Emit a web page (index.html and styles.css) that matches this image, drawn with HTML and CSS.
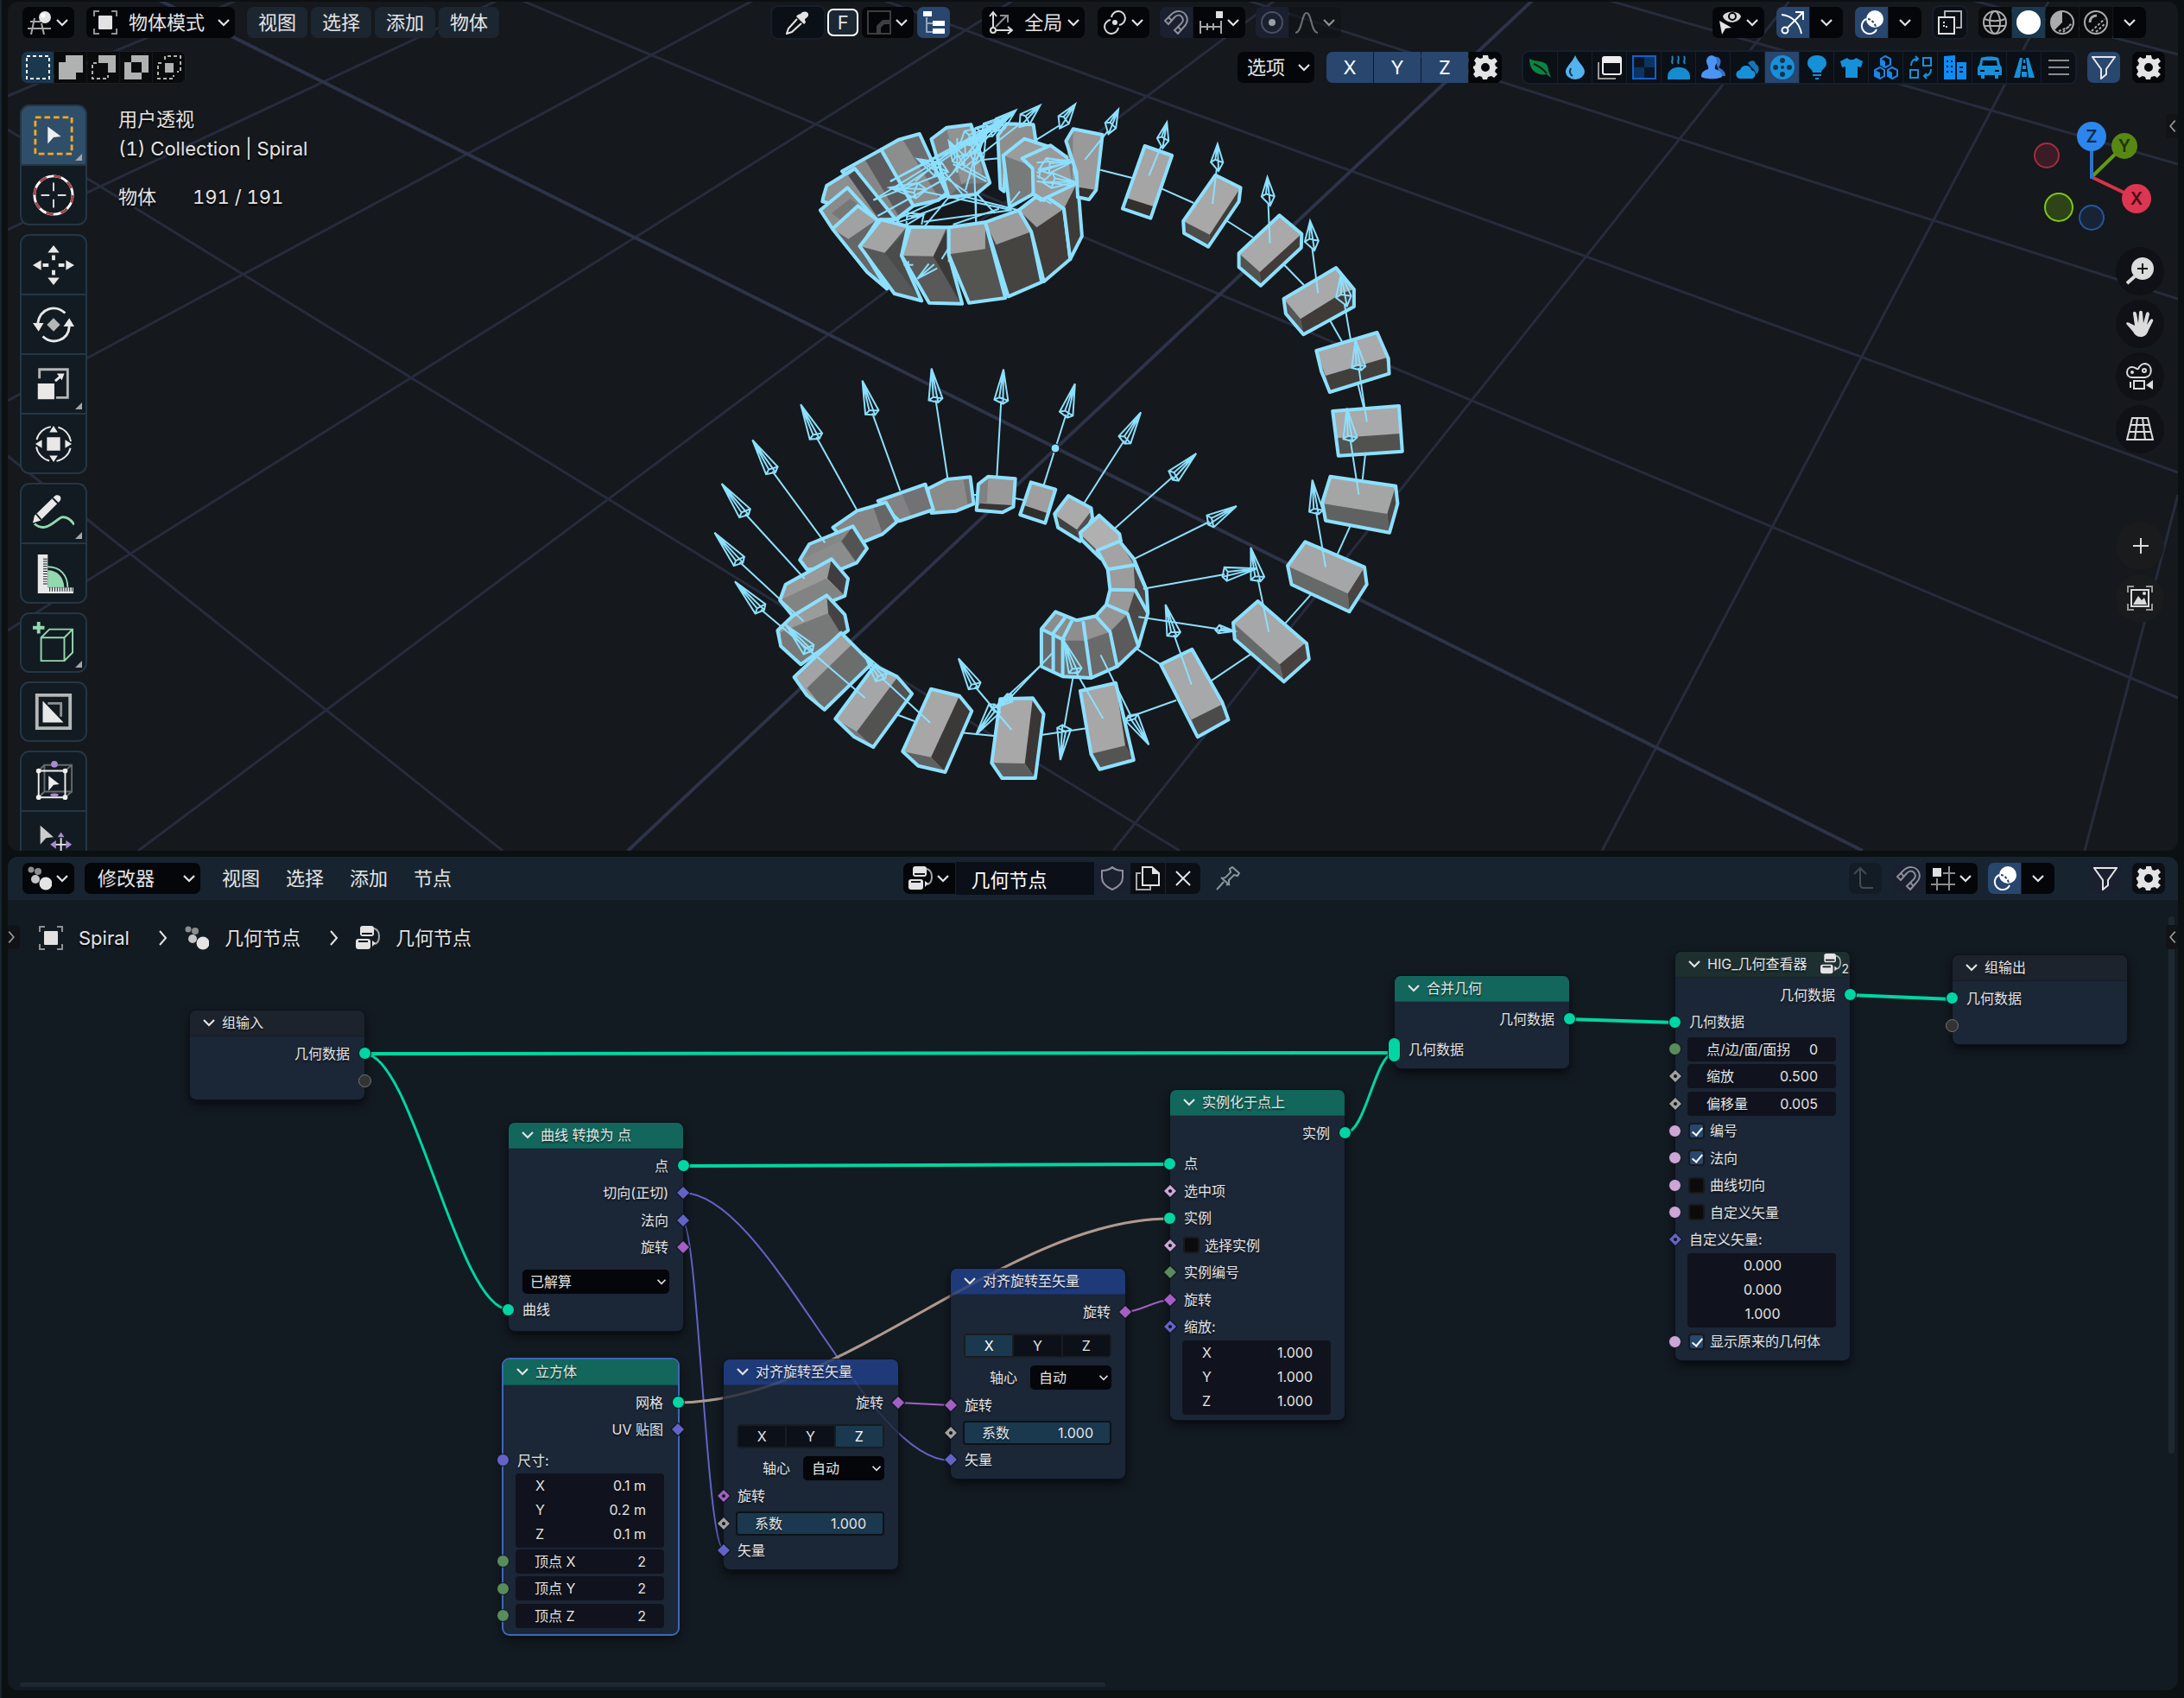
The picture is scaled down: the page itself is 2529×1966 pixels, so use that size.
FILE: index.html
```html
<!DOCTYPE html>
<html lang="zh-CN">
<head>
<meta charset="utf-8">
<title>几何节点</title>
<meta name="viewport" content="width=device-width, initial-scale=1">
<link rel="stylesheet" href="styles.css">
</head>
<body>
<svg class="defs" aria-hidden="true">
  <symbol id="chev" viewBox="0 0 16 10"><path d="M2 2l6 6 6-6" fill="none" stroke="currentColor" stroke-width="2.2"/></symbol>
  <symbol id="right" viewBox="0 0 10 20"><path d="M1 2l7 8-7 8" fill="none" stroke="currentColor" stroke-width="2"/></symbol>
  <symbol id="view3d" viewBox="0 0 28 28"><path d="M3 13h12M0 21h27M8 9L4 28M16 15l3 13" fill="none" stroke="#a5a7a8" stroke-width="2"/><circle cx="20" cy="8" r="7" fill="#e4e4e4"/><circle cx="18" cy="6" r="2.500" fill="#fff"/></symbol>
  <symbol id="object" viewBox="0 0 28 28"><path d="M1 7V1h6M21 1h6v6M27 21v6h-6M7 27H1v-6" fill="none" stroke="#8f9192" stroke-width="2"/><rect x="6" y="6" width="16" height="16" rx="1" fill="#e2e2e2"/></symbol>
  <symbol id="dropper" viewBox="0 0 28 28"><path d="M17 4c3-4 10-3 9 2-1 3-4 3-4 5l1 3-2 2-9-9 2-2z" fill="#e4e4e4"/><path d="M13 10L3 21l-2 6 6-2L18 15" fill="none" stroke="#e4e4e4" stroke-width="2"/></symbol>
  <symbol id="bevel" viewBox="0 0 28 28"><path d="M1 1h26v26H1z" fill="none" stroke="#3c3e40" stroke-width="2"/><path d="M11 26V18l7-7h8v5h-6l-4 4v6z" fill="#3c3e40"/></symbol>
  <symbol id="tree" viewBox="0 0 28 28"><path d="M6 8v17h8M6 15h8" fill="none" stroke="#8ea6c4" stroke-width="2"/><path d="M2 1h10v6H2zM13 12h14v6H13zM13 21h14v6H13z" fill="#fff"/></symbol>
  <symbol id="axes" viewBox="0 0 28 28"><path d="M5 22V3M1 7l4-5 4 5M6 23h20M22 19l5 4-5 4" fill="none" stroke="#dcdcdc" stroke-width="2"/><path d="M8 19L21 6M13 6h9v8" fill="none" stroke="#8b8d8f" stroke-width="2"/><circle cx="5" cy="23" r="3" fill="#04060a" stroke="#dcdcdc" stroke-width="2"/></symbol>
  <symbol id="pivot" viewBox="0 0 28 28"><path d="M19 17a8 8 0 1 0-9-9M9 11a8 8 0 1 0 9 9" fill="none" stroke="#dcdcdc" stroke-width="2"/><circle cx="14" cy="14" r="3" fill="#dcdcdc"/></symbol>
  <symbol id="magnet" viewBox="0 0 28 28"><path d="M1 12l7-7C14-1 23 0 26 7c2 5 0 9-3 12l-7 8-4-4 8-8c3-3 2-6 0-8s-5-2-8 1l-7 8z" fill="none" stroke="#8d8f99" stroke-width="2"/><path d="M5 8l4 4M16 19l4 4" stroke="#8d8f99" stroke-width="2"/></symbol>
  <symbol id="snapinc" viewBox="0 0 28 28"><path d="M1 19h26M2 12v15M10 15v8M17 15v8M26 12v15" fill="none" stroke="#a5a7a8" stroke-width="2"/><rect x="20" y="1" width="8" height="8" fill="#e0e0e0"/></symbol>
  <symbol id="prop" viewBox="0 0 28 28"><circle cx="14" cy="14" r="12" fill="none" stroke="#4a4f5c" stroke-width="2"/><circle cx="14" cy="14" r="4" fill="#9c9ea4"/></symbol>
  <symbol id="falloff" viewBox="0 0 28 28"><path d="M1 26c8 0 7-23 13-23s5 23 13 23" fill="none" stroke="#a5a7a8" stroke-width="2"/></symbol>
  <symbol id="eye" viewBox="0 0 28 28"><path d="M6 7c2-7 19-7 21 0-3 9-18 9-21 0z" fill="#d8d8d8"/><circle cx="17" cy="7" r="4" fill="#d8d8d8" stroke="#04060a" stroke-width="2"/><path d="M2 12l14 8-7 1-4 7z" fill="#e4e4e4"/></symbol>
  <symbol id="gizmo" viewBox="0 0 28 28"><path d="M1 5c12 1 21 10 23 22M8 20L25 3M17 2h9v9" fill="none" stroke="#fff" stroke-width="2"/><circle cx="5" cy="23" r="3.500" fill="none" stroke="#fff" stroke-width="2"/></symbol>
  <symbol id="overlay" viewBox="0 0 28 28"><circle cx="18" cy="10" r="10" fill="#fff"/><path d="M8 10a9 9 0 1 0 12 12" fill="none" stroke="#fff" stroke-width="2"/><path d="M10 10c3 0 9 5 9 10" fill="none" stroke="#28466e" stroke-width="2" stroke-dasharray="3 2"/></symbol>
  <symbol id="xray" viewBox="0 0 28 28"><path d="M8 7V1h19v19h-6" fill="none" stroke="#aaacae" stroke-width="2"/><path d="M1 8h18v19H1z" fill="none" stroke="#e0e0e0" stroke-width="2"/><path d="M7 13v6h6" fill="none" stroke="#e0e0e0" stroke-width="2" stroke-dasharray="2 2"/></symbol>
  <symbol id="wire" viewBox="0 0 28 28"><g fill="none" stroke="#a9abac" stroke-width="2"><circle cx="14" cy="14" r="13"/><ellipse cx="14" cy="14" rx="6" ry="13"/><path d="M2 10c7 3 17 3 24 0M2 18h24"/></g></symbol>
  <symbol id="solid" viewBox="0 0 28 28"><circle cx="14" cy="14" r="14" fill="#fff"/></symbol>
  <symbol id="matprev" viewBox="0 0 28 28"><circle cx="14" cy="14" r="13" fill="none" stroke="#a9abac" stroke-width="2"/><path d="M14 1v13l-9 9A13 13 0 0 1 14 1z" fill="#a9abac"/><path d="M15 25l10-10M10 24l12-5" stroke="#a9abac" stroke-width="2" stroke-dasharray="3 2"/></symbol>
  <symbol id="render" viewBox="0 0 28 28"><circle cx="14" cy="14" r="13" fill="none" stroke="#a9abac" stroke-width="2"/><path d="M7 14c0-5 3-8 8-8" fill="none" stroke="#a9abac" stroke-width="3"/><path d="M14 25l11-10M9 24l15-14" stroke="#a9abac" stroke-width="2" stroke-dasharray="3 2"/></symbol>
  <symbol id="gear" viewBox="0 0 28 28"><path fill-rule="evenodd" d="M11 0h6l1 4 3 1 4-2 3 4-3 3 1 3 2 1v1l-2 1-1 3 3 3-4 4-3-2-4 1-1 3h-5l-1-3-3-1-4 2-3-4 2-3-1-3-2-1v-2l3-1 1-3-2-3 3-4 4 2 3-1zM14 9a5 5 0 1 0 0 10 5 5 0 0 0 0-10z" fill="#e4e4e4"/></symbol>
  <symbol id="funnel" viewBox="0 0 28 28"><path d="M1 2h26L17 16v6l-6 5V16z" fill="none" stroke="#e6e6e6" stroke-width="2"/></symbol>
  <symbol id="nodes" viewBox="0 0 28 28"><path d="M21 3c4 1 6 4 6 9s-2 8-5 9" fill="none" stroke="#a5a7a8" stroke-width="2"/><rect x="5" y="0" width="16" height="12" rx="3" fill="#e4e4e4"/><rect x="0" y="15" width="17" height="12" rx="3" fill="#e4e4e4"/><path d="M7 9h12M3 18h11" stroke="#10161c" stroke-width="2"/><path d="M19 17v7l4-4z" fill="#e4e4e4"/></symbol>
  <symbol id="points" viewBox="0 0 28 28"><circle cx="4" cy="4" r="3.500" fill="#8b8d8f"/><circle cx="12" cy="6" r="4" fill="#8b8d8f"/><circle cx="9" cy="15" r="5" fill="#c4c5c6"/><circle cx="21" cy="20" r="7.500" fill="#e4e4e4"/></symbol>
  <symbol id="shield" viewBox="0 0 28 28"><path d="M14 1c3 3 7 4 12 4v8c0 7-5 11-12 14C7 24 2 20 2 13V5c5 0 9-1 12-4z" fill="none" stroke="#8d8f99" stroke-width="2"/></symbol>
  <symbol id="copy" viewBox="0 0 28 28"><path d="M6 8H1v19h16v-4" fill="none" stroke="#a9abac" stroke-width="2"/><path d="M8 1h11l8 7v14H8z" fill="none" stroke="#e4e4e4" stroke-width="2"/><path d="M19 1v8h8z" fill="#e4e4e4"/></symbol>
  <symbol id="cross" viewBox="0 0 28 28"><path d="M6 6l16 16M22 6L6 22" stroke="#e4e4e4" stroke-width="2"/></symbol>
  <symbol id="pin" viewBox="0 0 28 28"><path d="M1 27l8-9M6 13l10 9M8 14l3-1 6-6-1-4 3-2 8 7-2 3-4-1-6 6v4l-3 2" fill="none" stroke="#8d959b" stroke-width="2"/></symbol>
  <symbol id="up" viewBox="0 0 28 28"><path d="M1 9l7-7 7 7M8 2v18c0 3 1 5 4 5h11" fill="none" stroke="#434b52" stroke-width="2"/></symbol>
  <symbol id="snapgrid" viewBox="0 0 28 28"><path d="M14 8h14M0 21h28M7 14v14M21 0v28" stroke="#8b8d8f" stroke-width="2"/><rect x="2" y="2" width="10" height="10" fill="#e0e0e0"/></symbol>
</svg>

<main class="app">
  <section class="panel viewport" aria-label="3D 视图">
    <svg class="scene" id="scene" viewBox="9 2 2513 983" preserveAspectRatio="xMidYMid slice" aria-hidden="true"></svg>

    <header class="bar">
      <div class="group left">
        <button class="btn dark pair" aria-label="编辑器类型"><svg class="ic"><use href="#view3d"/></svg><svg class="chev"><use href="#chev"/></svg></button>
        <label class="pick mode"><svg class="ic"><use href="#object"/></svg><select aria-label="模式"><option>物体模式</option></select><svg class="chev"><use href="#chev"/></svg></label>
        <nav class="menus"><button class="btn menu filled">视图</button><button class="btn menu filled">选择</button><button class="btn menu filled">添加</button><button class="btn menu filled">物体</button></nav>
      </div>
      <div class="group mid">
        <button class="btn pair framed" aria-label="拾取"><svg class="ic"><use href="#dropper"/></svg></button>
        <button class="btn sq letter">F</button>
        <button class="btn dark pair bevel" aria-label="倒角"><svg class="ic"><use href="#bevel"/></svg><svg class="chev"><use href="#chev"/></svg></button>
        <button class="btn sq on" aria-label="层级"><svg class="ic"><use href="#tree"/></svg></button>
        <label class="pick orient"><svg class="ic"><use href="#axes"/></svg><select aria-label="变换坐标系"><option>全局</option></select><svg class="chev"><use href="#chev"/></svg></label>
        <button class="btn dark pair pivot" aria-label="轴心点"><svg class="ic"><use href="#pivot"/></svg><svg class="chev"><use href="#chev"/></svg></button>
        <div class="joined snap"><button class="btn sq off" aria-label="吸附"><svg class="ic"><use href="#magnet"/></svg></button><button class="btn dark pair" aria-label="吸附至"><svg class="ic"><use href="#snapinc"/></svg><svg class="chev"><use href="#chev"/></svg></button></div>
        <div class="joined"><button class="btn sq off" aria-label="衰减编辑"><svg class="ic"><use href="#prop"/></svg></button><button class="btn faint pair" aria-label="衰减"><svg class="ic"><use href="#falloff"/></svg><svg class="chev"><use href="#chev"/></svg></button></div>
      </div>
      <div class="group right">
        <button class="btn dark pair" aria-label="可见性"><svg class="ic"><use href="#eye"/></svg><svg class="chev"><use href="#chev"/></svg></button>
        <div class="joined"><button class="btn sq on" aria-label="Gizmo"><svg class="ic"><use href="#gizmo"/></svg></button><button class="btn dark sq" aria-label="Gizmo 选项"><svg class="chev"><use href="#chev"/></svg></button></div>
        <div class="joined"><button class="btn sq on" aria-label="叠加层"><svg class="ic"><use href="#overlay"/></svg></button><button class="btn dark sq" aria-label="叠加层选项"><svg class="chev"><use href="#chev"/></svg></button></div>
        <button class="btn sq framed" aria-label="透视模式"><svg class="ic"><use href="#xray"/></svg></button>
        <div class="joined shade"><button class="btn sq cell" aria-label="线框"><svg class="ic"><use href="#wire"/></svg></button><button class="btn sq sel" aria-label="实体"><svg class="ic"><use href="#solid"/></svg></button><button class="btn sq cell" aria-label="材质预览"><svg class="ic"><use href="#matprev"/></svg></button><button class="btn sq cell" aria-label="渲染"><svg class="ic"><use href="#render"/></svg></button><button class="btn dark sq" aria-label="着色选项"><svg class="chev"><use href="#chev"/></svg></button></div>
      </div>
    </header>

    <div class="bar second">
      <div class="joined selmode">
        <button class="btn sq sel" aria-label="新选择"><svg class="ic" viewBox="0 0 28 28"><path d="M1 1h26v26H1z" fill="none" stroke="#fff" stroke-width="2" stroke-dasharray="4 3"/></svg></button>
        <button class="btn sq cell" aria-label="扩展"><svg class="ic" viewBox="0 0 28 28"><path d="M8 0h20v20h-8v8H0V8h8z" fill="#b0b2b2"/></svg></button>
        <button class="btn sq cell" aria-label="减去"><svg class="ic" viewBox="0 0 28 28"><path d="M8 0h20v20h-9V9H8z" fill="#b0b2b2"/><path d="M6 9H1v18h18v-4" fill="none" stroke="#b0b2b2" stroke-width="2" stroke-dasharray="4 3"/></svg></button>
        <button class="btn sq cell" aria-label="反转"><svg class="ic" viewBox="0 0 28 28"><path fill-rule="evenodd" d="M8 0h20v20h-8v8H0V8h8zM8 8v12h12V8z" fill="#b0b2b2"/></svg></button>
        <button class="btn sq cell" aria-label="相交"><svg class="ic" viewBox="0 0 28 28"><path d="M9 9h10v11H9z" fill="#b0b2b2"/><path d="M9 5V1h18v18h-4M5 9H1v18h18v-4" fill="none" stroke="#b0b2b2" stroke-width="2" stroke-dasharray="4 3"/></svg></button>
      </div>
      <div class="group tools">
        <button class="btn dark options">选项<svg class="chev"><use href="#chev"/></svg></button>
        <div class="joined mirror"><button class="btn on axis">X</button><button class="btn on axis">Y</button><button class="btn on axis">Z</button><button class="btn dark sq" aria-label="设置"><svg class="ic"><use href="#gear"/></svg></button></div>
        <div class="joined kinds">
          <button aria-label="植物"><svg class="ic" viewBox="0 0 28 28"><path d="M1 4c8 5 22 0 22 14l3 8-5-4C9 24 1 17 1 4z" fill="#0c8440"/><path d="M6 10c7 3 11 6 15 11" stroke="#0d1b18" stroke-width="2" fill="none"/></svg></button>
          <button aria-label="液体"><svg class="ic" viewBox="0 0 28 28"><path d="M14 0c3 8 11 13 11 19a11 9 0 0 1-22 0C3 13 11 8 14 0z" fill="#52b3ee"/><path d="M9 15c-2 4-1 7 2 9" fill="none" stroke="#12344d" stroke-width="2"/></svg></button>
          <button aria-label="界面"><svg class="ic" viewBox="0 0 28 28"><path d="M1 8v19h20" fill="none" stroke="#999" stroke-width="2"/><rect x="6" y="2" width="21" height="20" rx="2" fill="none" stroke="#eee" stroke-width="2"/><path d="M6 3h21v6H6z" fill="#eee"/></svg></button>
          <button aria-label="纹理"><svg class="ic" viewBox="0 0 28 28"><path d="M1 1h26v26H1z" fill="#0b1522" stroke="#1260d0" stroke-width="2"/><path d="M14 2h12v12H14zM2 14h12v12H2z" fill="#0c3460"/></svg></button>
          <button aria-label="食物"><svg class="ic" viewBox="0 0 28 28"><path d="M1 25c0-15 26-15 26 0v3H1z" fill="#168bd0"/><path d="M6 1c3 3-2 5 1 9M13 1c3 3-2 5 1 9M20 1c3 3-2 5 1 9" fill="none" stroke="#168bd0" stroke-width="2"/></svg></button>
          <button aria-label="角色"><svg class="ic" viewBox="0 0 28 28"><path d="M15 2c9-2 9 8 5 12 6 3 8 6 8 10h-6z" fill="#3672c8"/><path d="M6 7c0-9 12-9 12 0 0 4-3 5-2 9 6 2 8 4 8 9-4 3-20 3-24 0 0-5 2-7 8-9 1-4-2-5-2-9z" fill="#4a94f6"/></svg></button>
          <button aria-label="天气"><svg class="ic" viewBox="0 0 28 28"><path d="M14 9c5-5 9-2 9 1 4 2 5 8 1 12-2-5-6-8-10-13z" fill="#1576b4"/><path d="M4 27c-5-1-5-9 1-10 2-7 12-6 13 0 7 2 5 9 1 10z" fill="#1790da"/></svg></button>
          <button class="picked" aria-label="影视"><svg class="ic" viewBox="0 0 28 28"><circle cx="14" cy="14" r="14" fill="#1790da"/><g fill="#16334e"><circle cx="14" cy="6" r="3"/><circle cx="14" cy="22" r="3"/><circle cx="6" cy="14" r="3"/><circle cx="22" cy="14" r="3"/><circle cx="14" cy="14" r="2"/></g></svg></button>
          <button aria-label="灯光"><svg class="ic" viewBox="0 0 28 28"><path d="M9 20c0-4-6-5-6-11C3-3 25-3 25 9c0 6-6 7-6 11zM9 22h10v2H9zM12 26h4v2h-4z" fill="#1790da"/></svg></button>
          <button aria-label="服装"><svg class="ic" viewBox="0 0 28 28"><path d="M9 3c2 3 8 3 10 0l8 4-2 7-4-1v13H7V13l-4 1-2-7z" fill="#1790da"/></svg></button>
          <button aria-label="几何"><svg class="ic" viewBox="0 0 28 28"><g fill="#0b1017" stroke="#1a86e8" stroke-width="2"><path d="M13 1l6 3v7l-6 3-5-3V4z"/><path d="M7 14l5 3v7l-5 3-6-3v-7zM21 14l6 3v7l-6 3-5-3v-7z"/></g><path d="M1 17l6 3v7l-6-3zM16 17l5 3v7l-5-3zM8 4l5 3v7l-5-3z" fill="#1a86e8"/></svg></button>
          <button aria-label="转换"><svg class="ic" viewBox="0 0 28 28"><path d="M17 3h9v9h-9zM2 17h9v9H2zM3 12c0-5 2-8 8-8M8 1l3 3-3 3M26 16c0 5-2 8-8 8M21 21l-3 3 3 3" fill="none" stroke="#1790da" stroke-width="2"/></svg></button>
          <button aria-label="建筑"><svg class="ic" viewBox="0 0 28 28"><path d="M1 1l13-1v28H1zM16 8h11v20H16z" fill="#0d8df5"/><path d="M4 6h2v2H4zM9 6h2v2H9zM4 12h2v2H4zM9 12h2v2H9zM4 18h2v2H4zM9 18h2v2H9zM19 13h4v2h-4zM19 18h4v2h-4z" fill="#0b1522"/></svg></button>
          <button aria-label="载具"><svg class="ic" viewBox="0 0 28 28"><path fill-rule="evenodd" d="M4 3c4-2 16-2 20 0l2 8 2 3v9h-4v4h-4v-4H8v4H4v-4H0v-9l2-3zM6 6l-1 6h18l-1-6zM3 17v2h5v-2zM20 17v2h5v-2z" fill="#1790da"/></svg></button>
          <button aria-label="道路"><svg class="ic" viewBox="0 0 28 28"><path d="M9 3h3l-3 23H2zM16 3h3l7 23h-7zM13 5h2v4h-2zM12 12h4v4h-4zM11 19h6v6h-6z" fill="#1790da"/></svg></button>
          <button aria-label="列表"><svg class="ic" viewBox="0 0 28 28"><path d="M2 6h24M2 14h24M2 22h24" stroke="#8a8c8e" stroke-width="2"/></svg></button>
        </div>
        <button class="btn sq on" aria-label="过滤"><svg class="ic"><use href="#funnel"/></svg></button>
        <button class="btn dark sq" aria-label="偏好"><svg class="ic"><use href="#gear"/></svg></button>
      </div>
    </div>

    <div class="stage">
      <div class="toolbar">
        <div class="toolset">
          <button class="active more" aria-label="框选"><svg viewBox="0 0 50 50"><path d="M3 3h44v44H3z" fill="none" stroke="#f7a823" stroke-width="3" stroke-dasharray="7 4"/><path d="M18 14l16 12-9 1-7 8z" fill="#eee"/></svg></button>
          <button aria-label="游标"><svg viewBox="0 0 50 50"><circle cx="25" cy="25" r="23" fill="none" stroke="#fff" stroke-width="3"/><circle cx="25" cy="25" r="23" fill="none" stroke="#a5444a" stroke-width="3" stroke-dasharray="9 9"/><path d="M25 10v10M25 30v10M10 25h10M30 25h10" stroke="#ddd" stroke-width="2"/></svg></button>
        </div>
        <div class="toolset">
          <button aria-label="移动"><svg viewBox="0 0 50 50"><path d="M25 1l7 9H18zM25 49l-7-9h14zM0 25l10-6v12zM50 25l-10 6V19zM23 13h4v6h-4zM23 31h4v6h-4zM12 23h7v4h-7zM31 23h7v4h-7z" fill="#e8e8e8"/></svg></button>
          <button aria-label="旋转"><svg viewBox="0 0 50 50"><path d="M6 23C9 5 27 0 39 11M12 39C24 50 43 44 44 27" fill="none" stroke="#e8e8e8" stroke-width="3"/><path d="M0 23h13l-6 10zM37 27h13l-6-10z" fill="#e8e8e8"/><path d="M25 17l8 8-8 8-8-8z" fill="#b5b7b7"/></svg></button>
          <button class="more" aria-label="缩放"><svg viewBox="0 0 50 50"><path d="M8 18V7h34v34H28" fill="none" stroke="#b5b7b7" stroke-width="3"/><path d="M6 24h20v19H6z" fill="#e8e8e8"/><path d="M27 21l7-6" stroke="#e8e8e8" stroke-width="3"/><path d="M29 12h9l-3 8z" fill="#e8e8e8"/></svg></button>
          <button aria-label="变换"><svg viewBox="0 0 50 50"><circle cx="25" cy="25" r="21" fill="none" stroke="#e8e8e8" stroke-width="2" stroke-dasharray="24 9" stroke-dashoffset="-5"/><path d="M17 17h16v16H17zM25 3l5 8H20zM25 47l-5-8h10zM3 25l8-5v10zM47 25l-8 5V20z" fill="#e8e8e8"/></svg></button>
        </div>
        <div class="toolset">
          <button class="more" aria-label="标注"><svg viewBox="0 0 50 50"><path d="M2 37c14 12 26-6 33-8 6-1 11 3 15 9" fill="none" stroke="#93d9b0" stroke-width="3"/><path d="M0 36l2-9L26 4c4-4 10 0 7 5L9 33z" fill="#e8e8e8"/><path d="M4 25l6 7M24 6l7 7" stroke="#121b22" stroke-width="2"/></svg></button>
          <button aria-label="测量"><svg viewBox="0 0 50 50"><path d="M18 21c12 0 19 8 20 21H18z" fill="#93d9b0"/><path d="M18 17c15 0 24 10 24 25" fill="none" stroke="#93d9b0" stroke-width="2"/><path d="M6 2h12v40h31v7H6z" fill="#e8e8e8"/><path d="M15 7v33M20 44h28" stroke="#121b22" stroke-width="5" stroke-dasharray="1 2"/></svg></button>
        </div>
        <div class="toolset">
          <button class="more" aria-label="添加立方体"><svg viewBox="0 0 50 50"><path d="M7 0v14M0 7h14" stroke="#93d9b0" stroke-width="4"/><path d="M10 19h28v28H10zM10 19l10-10h28v28l-10 10M38 19l10-10" fill="none" stroke="#93d9b0" stroke-width="2"/></svg></button>
        </div>
        <div class="toolset">
          <button aria-label="遮罩"><svg viewBox="0 0 50 50"><path d="M5 5h40v40H5z" fill="none" stroke="#b5b7b7" stroke-width="4"/><path d="M18 15h16v16" fill="none" stroke="#8f9192" stroke-width="3"/><path d="M12 12l25 26H12z" fill="#e8e8e8"/></svg></button>
        </div>
        <div class="toolset">
          <button aria-label="框架"><svg viewBox="0 0 50 50"><path d="M14 5h33v32H14zM7 12l7-7M39 12l8-7M39 44l8-7M7 44l7-7" fill="none" stroke="#666a6c" stroke-width="2"/><path d="M7 12h32v32H7z" fill="none" stroke="#eee" stroke-width="2"/><g fill="#eee"><circle cx="7" cy="12" r="3"/><circle cx="39" cy="12" r="3"/><circle cx="7" cy="44" r="3"/><circle cx="39" cy="44" r="3"/><path d="M19 18l13 10-7 1-6 7z"/></g><circle cx="26" cy="4" r="4" fill="#ab8bd0"/><ellipse cx="26" cy="41" rx="5" ry="2" fill="#ab8bd0"/></svg></button>
          <button aria-label="选择移动"><svg viewBox="0 0 50 50"><path d="M9 6l16 14-9 1-7 8z" fill="#ccc"/><path d="M34 21v28M24 29h20" stroke="#e8e8e8" stroke-width="2"/><path d="M34 14l4 6h-8zM21 29l7-5v10zM47 29l-7 5V24z" fill="#ab8bd0"/></svg></button>
        </div>
      </div>
      <div class="info">
        <p>用户透视</p>
        <p>(1) Collection | Spiral</p>
        <dl><dt>物体</dt><dd>191 / 191</dd></dl>
      </div>
      <div class="navs">
        <svg class="axisball" viewBox="2350 121 156 160" role="img" aria-label="视图方向">
          <path d="M2422 205L2456 172" stroke="#629b12" stroke-width="4"/><path d="M2422 205L2470 228" stroke="#d8334a" stroke-width="4"/><path d="M2422 207V160" stroke="#2b74c8" stroke-width="4"/>
          <circle cx="2370" cy="180" r="14" fill="#3a1c26" stroke="#a52c40" stroke-width="2"/><circle cx="2384" cy="240" r="16" fill="#2f4318" stroke="#7bc80e" stroke-width="2"/><circle cx="2422" cy="252" r="14" fill="#182436" stroke="#22589c" stroke-width="2"/>
          <circle cx="2422" cy="158" r="17" fill="#2c86ee"/><circle cx="2460" cy="169" r="15" fill="#578912"/><circle cx="2474" cy="230" r="17" fill="#dd3650"/>
          <g class="axisname"><text x="2422" y="165" fill="#0e2c50">Z</text><text x="2460" y="176" fill="#1f3208">Y</text><text x="2474" y="237" fill="#4c0e1a">X</text></g>
        </svg>
        <button class="round" aria-label="缩放视图"><svg viewBox="0 0 32 32"><circle cx="19" cy="13" r="13" fill="#dcdcdc"/><path d="M10 22l-9 8" stroke="#dcdcdc" stroke-width="4"/><path d="M19 7v12M13 13h12" stroke="#121318" stroke-width="2"/></svg></button>
        <button class="round" aria-label="移动视图"><svg viewBox="0 0 32 32"><path d="M8 4c0-3 3-3 4 0l2 11 1-12c0-3 4-3 4 0l1 12 3-11c1-3 4-2 4 1l-3 12 4-6c2-2 4 0 3 2l-5 10c-2 6-5 8-9 8s-7-2-9-6l-7-8c-2-2 0-4 3-2l6 3z" fill="#dcdcdc"/></svg></button>
        <button class="round" aria-label="摄像机视图"><svg viewBox="0 0 32 32"><path d="M7 5c4 0 5 3 7 2 2-4 4-6 8-6 9 1 9 15 0 16H7C-1 17-1 5 7 5z" fill="none" stroke="#dcdcdc" stroke-width="2"/><circle cx="7" cy="11" r="2" fill="#dcdcdc"/><circle cx="21" cy="9" r="2" fill="none" stroke="#dcdcdc" stroke-width="2"/><path d="M9 21h12v9H9zM5 22v7" fill="none" stroke="#dcdcdc" stroke-width="2"/><path d="M31 20v11l-8-5z" fill="#dcdcdc"/></svg></button>
        <button class="round" aria-label="透视/正交"><svg viewBox="0 0 32 32"><path d="M7 3h18l6 25H1zM5 11h22M3 19h26M13 3l-3 25M19 3l3 25" fill="none" stroke="#dcdcdc" stroke-width="2"/></svg></button>
        <button class="round apart" aria-label="添加"><svg viewBox="0 0 32 32"><path d="M17 7v18M8 16h18" stroke="#dcdcdc" stroke-width="2"/></svg></button>
        <button class="round plain" aria-label="图像"><svg viewBox="0 0 32 32"><path d="M2 9V2h7M23 2h7v7M30 22v7h-7M9 29H2v-7" fill="none" stroke="#999" stroke-width="2"/><path d="M6 6h20v19H6z" fill="none" stroke="#dcdcdc" stroke-width="2"/><path d="M8 23l6-10 4 5 3-3 3 8z" fill="#dcdcdc"/><circle cx="21" cy="10" r="2" fill="#dcdcdc"/></svg></button>
      </div>
    </div>
    <button class="fold foldtop" aria-label="展开侧栏"><svg viewBox="0 0 10 20"><use href="#right"/></svg></button>
  </section>

  <section class="panel editor" aria-label="几何节点编辑器">
    <header class="bar nodebar">
      <div class="group">
        <button class="btn dark pair" aria-label="编辑器类型"><svg class="ic"><use href="#points"/></svg><svg class="chev"><use href="#chev"/></svg></button>
        <label class="pick kind"><select aria-label="节点树类型"><option>修改器</option></select><svg class="chev"><use href="#chev"/></svg></label>
        <nav class="menus"><button class="btn menu">视图</button><button class="btn menu">选择</button><button class="btn menu">添加</button><button class="btn menu">节点</button></nav>
      </div>
      <div class="group treepick">
        <div class="joined">
          <button class="btn dark pair" aria-label="浏览节点树"><svg class="ic"><use href="#nodes"/></svg><svg class="chev"><use href="#chev"/></svg></button>
          <input class="treename" aria-label="节点树名称" value="几何节点">
          <button class="btn sq off" aria-label="伪用户"><svg class="ic"><use href="#shield"/></svg></button>
          <button class="btn sq deep" aria-label="复制"><svg class="ic"><use href="#copy"/></svg></button>
          <button class="btn sq deep" aria-label="断开"><svg class="ic"><use href="#cross"/></svg></button>
        </div>
        <button class="btn sq" aria-label="固定"><svg class="ic"><use href="#pin"/></svg></button>
      </div>
      <div class="group nright">
        <button class="btn sq shadowed" aria-label="上一级"><svg class="ic"><use href="#up"/></svg></button>
        <div class="joined"><button class="btn sq off" aria-label="吸附"><svg class="ic"><use href="#magnet"/></svg></button><button class="btn dark pair" aria-label="吸附方式"><svg class="ic"><use href="#snapgrid"/></svg><svg class="chev"><use href="#chev"/></svg></button></div>
        <div class="joined"><button class="btn sq on" aria-label="叠加层"><svg class="ic"><use href="#overlay"/></svg></button><button class="btn dark sq" aria-label="叠加层选项"><svg class="chev"><use href="#chev"/></svg></button></div>
        <button class="btn sq off wide" aria-label="过滤"><svg class="ic"><use href="#funnel"/></svg></button>
        <button class="btn deep sq" aria-label="偏好"><svg class="ic"><use href="#gear"/></svg></button>
      </div>
    </header>

    <div class="canvas">
      <nav class="crumbs" aria-label="路径">
        <svg class="ic"><use href="#object"/></svg><span>Spiral</span>
        <svg class="sep"><use href="#right"/></svg>
        <svg class="ic"><use href="#points"/></svg><span>几何节点</span>
        <svg class="sep"><use href="#right"/></svg>
        <svg class="ic"><use href="#nodes"/></svg><span>几何节点</span>
      </nav>

      <svg class="wires" aria-hidden="true">
        <g transform="translate(-9 -1042)" fill="none">
          <g class="w geo thick"><path d="M422 1220L1615 1219"/><path d="M790 1350L1355 1348"/><path d="M1817 1180L1940 1184"/><path d="M2142 1152L2261 1157"/></g>
          <g class="w geo"><path d="M422 1220C478 1220 530 1516 589 1516"/><path d="M1557 1312C1582 1312 1592 1219 1615 1219"/></g>
          <path class="w vec" d="M790 1381C890 1381 1001 1691 1101 1691"/><path class="w vec" d="M790 1413C808 1413 818 1794 838 1794"/>
          <path class="w inst" d="M785 1624C975 1624 1165 1411 1355 1411"/>
          <path class="w rot" d="M1040 1624L1101 1627"/><path class="w rot" d="M1303 1519C1320 1519 1338 1505 1355 1505"/>
        </g>
      </svg>

      <article class="node n-in"><h2 class="plainhead"><svg class="chev"><use href="#chev"/></svg>组输入</h2>
        <div class="row out">几何数据<i class="s geo"></i></div><div class="row out"><i class="s none"></i></div></article>

      <article class="node n-curve"><h2 class="green"><svg class="chev"><use href="#chev"/></svg>曲线 转换为 点</h2>
        <div class="row out">点<i class="s geo"></i></div><div class="row out">切向(正切)<i class="s dia vec"></i></div><div class="row out">法向<i class="s dia vec"></i></div><div class="row out">旋转<i class="s dia rot"></i></div>
        <label class="drop full"><select aria-label="模式"><option>已解算</option></select><svg class="chev"><use href="#chev"/></svg></label>
        <div class="row after">曲线<i class="s geo"></i></div></article>

      <article class="node n-cube selected"><h2 class="green"><svg class="chev"><use href="#chev"/></svg>立方体</h2>
        <div class="row out">网格<i class="s geo"></i></div><div class="row out">UV 贴图<i class="s dia vec"></i></div>
        <div class="row apart">尺寸:<i class="s vec"></i></div>
        <div class="vector"><label>X<input value="0.1 m"></label><label>Y<input value="0.2 m"></label><label>Z<input value="0.1 m"></label></div>
        <div class="row"><i class="s int"></i><label class="field">顶点 X<input value="2"></label></div>
        <div class="row"><i class="s int"></i><label class="field">顶点 Y<input value="2"></label></div>
        <div class="row"><i class="s int"></i><label class="field">顶点 Z<input value="2"></label></div></article>

      <article class="node n-alignz"><h2 class="blue"><svg class="chev"><use href="#chev"/></svg>对齐旋转至矢量</h2>
        <div class="row out">旋转<i class="s dia rot"></i></div>
        <div class="axes"><button>X</button><button>Y</button><button class="picked">Z</button></div>
        <label class="drop half">轴心<span><select><option>自动</option></select><svg class="chev"><use href="#chev"/></svg></span></label>
        <div class="row after">旋转<i class="s dia rot hole"></i></div>
        <div class="row"><i class="s dia num hole"></i><label class="field slider">系数<input value="1.000"></label></div>
        <div class="row">矢量<i class="s dia vec"></i></div></article>

      <article class="node n-alignx"><h2 class="blue"><svg class="chev"><use href="#chev"/></svg>对齐旋转至矢量</h2>
        <div class="row out">旋转<i class="s dia rot"></i></div>
        <div class="axes"><button class="picked">X</button><button>Y</button><button>Z</button></div>
        <label class="drop half">轴心<span><select><option>自动</option></select><svg class="chev"><use href="#chev"/></svg></span></label>
        <div class="row after">旋转<i class="s dia rot"></i></div>
        <div class="row"><i class="s dia num hole"></i><label class="field slider">系数<input value="1.000"></label></div>
        <div class="row">矢量<i class="s dia vec"></i></div></article>

      <article class="node n-inst"><h2 class="green"><svg class="chev"><use href="#chev"/></svg>实例化于点上</h2>
        <div class="row out">实例<i class="s geo"></i></div>
        <div class="row apart">点<i class="s geo"></i></div>
        <div class="row">选中项<i class="s dia bool hole"></i></div>
        <div class="row">实例<i class="s geo"></i></div>
        <div class="row"><i class="s dia bool hole"></i><label class="tick"><input type="checkbox">选择实例</label></div>
        <div class="row">实例编号<i class="s dia int"></i></div>
        <div class="row">旋转<i class="s dia rot"></i></div>
        <div class="row">缩放:<i class="s dia vec hole"></i></div>
        <div class="vector"><label>X<input value="1.000"></label><label>Y<input value="1.000"></label><label>Z<input value="1.000"></label></div></article>

      <article class="node n-join"><h2 class="green"><svg class="chev"><use href="#chev"/></svg>合并几何</h2>
        <div class="row out">几何数据<i class="s geo"></i></div>
        <div class="row apart">几何数据<i class="s geo multi"></i></div></article>

      <article class="node n-hig"><h2 class="teal"><svg class="chev"><use href="#chev"/></svg>HIG_几何查看器<svg class="ic users"><use href="#nodes"/></svg><small>2</small></h2>
        <div class="row out">几何数据<i class="s geo"></i></div>
        <div class="row">几何数据<i class="s geo"></i></div>
        <div class="row"><i class="s int"></i><label class="field">点/边/面/面拐<input value="0"></label></div>
        <div class="row"><i class="s dia num hole"></i><label class="field">缩放<input value="0.500"></label></div>
        <div class="row"><i class="s dia num hole"></i><label class="field">偏移量<input value="0.005"></label></div>
        <div class="row"><i class="s bool"></i><label class="tick"><input type="checkbox" checked>编号</label></div>
        <div class="row"><i class="s bool"></i><label class="tick"><input type="checkbox" checked>法向</label></div>
        <div class="row"><i class="s bool"></i><label class="tick"><input type="checkbox">曲线切向</label></div>
        <div class="row"><i class="s bool"></i><label class="tick"><input type="checkbox">自定义矢量</label></div>
        <div class="row">自定义矢量:<i class="s dia vec hole"></i></div>
        <div class="vector centred"><label><input aria-label="X" value="0.000"></label><label><input aria-label="Y" value="0.000"></label><label><input aria-label="Z" value="1.000"></label></div>
        <div class="row"><i class="s bool"></i><label class="tick"><input type="checkbox" checked>显示原来的几何体</label></div></article>

      <article class="node n-out"><h2 class="plainhead"><svg class="chev"><use href="#chev"/></svg>组输出</h2>
        <div class="row">几何数据<i class="s geo"></i></div><div class="row"><i class="s none"></i></div></article>

      <svg class="wires ghost" aria-hidden="true"><g transform="translate(-9 -1042)" fill="none"><path class="w vec" d="M790 1381C890 1381 1001 1691 1101 1691"/><path class="w inst" d="M785 1624C975 1624 1165 1411 1355 1411"/></g></svg>
      <div class="scroll vert"></div><div class="scroll horz"></div>
      <button class="fold foldleft" aria-label="展开工具栏"><svg viewBox="0 0 10 20"><use href="#right"/></svg></button>
      <button class="fold foldright" aria-label="展开侧栏"><svg viewBox="0 0 10 20"><use href="#right"/></svg></button>
    </div>
  </section>
</main>
<script src="scene.js"></script>
</body>
</html>
```
FILE: styles.css
```css
* { box-sizing: border-box; }
body { margin: 0; background: #0b1013; color: #e4e4e4; font: 22px/28px Inter, "Noto Sans CJK SC", sans-serif; }
button, input, select { font: inherit; color: inherit; border: 0; background: none; padding: 0; margin: 0; }
button { display: flex; align-items: center; justify-content: center; flex: none; }
select { appearance: none; min-width: 0; flex: 1; }
p, h2, dl, dd { margin: 0; }
.defs { position: absolute; width: 0; height: 0; }

.app { height: 100vh; padding: 2px 7px 9px 7px; display: grid; grid-template-rows: 983fr 965fr; gap: 7px; border-left: 2px solid #18232d; }
.panel { position: relative; border-radius: 12px; overflow: hidden; display: flex; flex-direction: column; min-height: 0; }
.viewport { background: #15181c; }
.editor { background: #131b22; }
.scene { position: absolute; inset: 0; width: 100%; height: 100%; }

/* header bars */
.bar { position: relative; display: flex; align-items: center; height: 36px; margin-top: 6px; padding: 0 15px 0 17px; }
.second { margin-top: 16px; padding-left: 16px; justify-content: space-between; }
.group { display: flex; align-items: center; }
.ic { width: 28px; height: 28px; flex: none; display: block; }
.chev { width: 16px; height: 10px; flex: none; color: #e4e4e4; }
.btn { height: 36px; border-radius: 7px; }
.dark, .pick { background: #04060a; }
.pair { width: 60px; gap: 4px; }
.sq { width: 38px; }
.on { background: #28466e; color: #fff; }
.sel { background: #1a384e; }
.off { background: #1a2030; }
.deep { background: #0b0f14; }
.cell { background: #090b0d; }
.faint { opacity: .6; background: #101216; }
.shadowed { background: #131c24; }
.framed { background: #0b1017; box-shadow: 0 0 0 2px #171f2e; }
.letter { width: 36px; height: 32px; border: 2px solid #fff; background: #1b2733; }
.joined { display: flex; align-items: center; gap: 1px; }
.joined > * { border-radius: 0; }
.joined > :first-child { border-radius: 7px 0 0 7px; }
.joined > :last-child { border-radius: 0 7px 7px 0; }
.pick { height: 36px; border-radius: 7px; display: flex; align-items: center; padding: 0 5px 0 8px; }
.pick .ic + select { margin-left: 13px; }
.mode { width: 172px; }
.kind { width: 134px; padding-left: 15px; }
.orient { width: 119px; }
.menus { display: flex; gap: 4px; }
.menu { width: 70px; }
.filled { background: #1c2631; }
.left { gap: 14px; }
.mid { gap: 4px; }
.orient { margin-left: 33px; }
.pivot { margin-left: 11px; }
.snap { margin: 0 8px; }
.right { margin-right: 22px; gap: 14px; }
.viewport > header.bar { display: grid; grid-template-columns: auto 318fr auto 432fr auto; }
.viewport .left { grid-column: 1; }
.viewport .mid { grid-column: 3; }
.viewport .right { grid-column: 5; }
.selmode { box-shadow: 0 0 0 1px #1c1e20; border-radius: 7px; }
.selmode .btn { width: 37px; }
.tools { gap: 14px; }
.options { width: 89px; gap: 14px; justify-content: flex-end; padding-right: 4px; }
.axis { width: 54px; }
.kinds { margin-left: 11px; border-radius: 7px; box-shadow: 0 0 0 2px #171f2e; background: #171f2e; }
.kinds button { width: 39px; height: 36px; background: #0b1017; }
.kinds .picked { background: #28466e; }

/* viewport body */
.stage { position: relative; flex: 1; min-height: 0; display: flex; align-items: flex-start; margin-top: 25px; padding: 0 16px 0 14px; }
.toolbar { width: 78px; display: flex; flex-direction: column; gap: 10px; }
.toolset { border: 2px solid #243646; border-radius: 11px; overflow: hidden; background: #243646; display: grid; gap: 2px; }
.toolset button { position: relative; height: 67px; background: #121b22; }
.toolset button:only-child { height: 66px; }
.toolset svg { width: 48px; height: 48px; }
.toolset .active { background: #2f4e69; }
.more::after { content: ""; position: absolute; right: 4px; bottom: 4px; border: 4px solid; border-color: transparent #a5a7a8 #a5a7a8 transparent; }
.info { margin-left: 36px; line-height: 34px; font-variant-numeric: tabular-nums; text-shadow: 0 2px 2px #000; }
.info dl { display: flex; gap: 42px; margin-top: 22px; }
.navs { margin-left: auto; display: flex; flex-direction: column; align-items: flex-end; gap: 5px; }
.axisball { width: 156px; height: 160px; }
.axisname { font: 600 20px Inter, sans-serif; text-anchor: middle; }
.round { width: 56px; height: 56px; border-radius: 28px; background: #101116; }
.round svg { width: 32px; height: 32px; }
.apart.round { margin-top: 74px; background: #1a1b1c; }
.round.plain { background: #1a1b1c; }
.fold { position: absolute; width: 14px; height: 28px; color: #9a9c9e; background: #111316; border-radius: 4px; }
.fold svg { width: 9px; height: 16px; }
.foldtop { top: 130px; right: 0; }
.foldright { top: 29px; right: 0; }
.foldtop svg, .foldright svg { transform: scaleX(-1); }
.foldleft { top: 29px; left: 0; justify-content: flex-start; }

/* node editor header */
.nodebar { margin: 0; height: 50px; flex: none; background: #17242f; display: grid; grid-template-columns: auto 510fr auto 698fr auto; }
.nodebar .group { gap: 12px; }
.treepick { grid-column: 3; }
.treepick .sq { width: 40px; }
.nright { grid-column: 5; }
.treename { width: 160px; height: 38px; padding-left: 17px; background: #0b0f17; color: #fff; }
.wide { margin-left: 28px; }

/* canvas */
.canvas { position: relative; flex: 1; overflow: hidden; font-size: 16px; line-height: 24px; }
.crumbs { display: flex; align-items: center; padding: 30px 0 0 36px; font-size: 22px; line-height: 28px; text-shadow: 0 2px 2px #000; }
.crumbs span { margin-left: 18px; }
.sep { width: 10px; height: 20px; margin: 0 20px 0 34px; }
.wires { position: absolute; inset: 0; width: 100%; height: 100%; pointer-events: none; }
.ghost { opacity: .2; }
.w { stroke-width: 2; }
.w.geo { stroke: #00d6a3; stroke-width: 3; }
.w.thick { stroke-width: 4; }
.w.vec { stroke: #6363c7; }
.w.rot { stroke: #a35fc4; }
.w.inst { stroke: #b09a8e; stroke-width: 3; }

.node { position: absolute; width: 202px; padding: 0 15px 6px; border-radius: 7px; background: #1b2636; box-shadow: 0 0 0 1px #0c121b, 0 5px 12px #06090d; text-shadow: 0 2px 2px #0008; }
.node h2 { display: flex; align-items: center; height: 30px; margin: 0 -15px 4px; padding: 0 0 1px 14px; border-radius: 7px 7px 0 0; font-size: 16px; font-weight: 400; border-bottom: 1px solid #0003; white-space: nowrap; }
.node h2 .chev { margin-right: 7px; }
.plainhead { background: #1d232c; }
.green { background: #12665c; }
.blue { background: #1f3a78; }
.teal { background: #1e2f30; }
.users { width: 24px; height: 24px; margin-left: 16px; }
.node small { font-size: 14px; align-self: flex-end; line-height: 16px; }
.selected { box-shadow: 0 0 0 2px #3f66ba, 0 5px 12px #06090d; }
.row { position: relative; display: flex; align-items: center; height: 31px; padding: 0 2px 0 1px; white-space: nowrap; }
.row:nth-child(odd) { height: 32px; }
.out { justify-content: flex-end; }
.apart.row { margin-top: 4px; }
.after { margin-top: 2px; }

/* sockets sit on the node's edge */
.s { position: absolute; left: -23px; width: 15px; height: 15px; border-radius: 8px; border: 1px solid #0b1016; }
.out .s { left: auto; right: -23px; }
.s.geo { background: #00d6a3; }
.s.vec { background: #6363c7; }
.s.rot { background: #a35fc4; }
.s.int { background: #598c5c; }
.s.num { background: #a1a1a1; }
.s.bool { background: #cca6d6; }
.s.none { background: #333; border-color: #777; }
.s.dia { width: 12px; height: 12px; left: -21px; border-radius: 1px; transform: rotate(45deg); }
.out .s.dia { left: auto; right: -21px; }
.hole::after { content: ""; position: absolute; left: 3px; top: 3px; width: 4px; height: 4px; border-radius: 2px; background: #10151c; }
.s.multi { height: 29px; }

.field { flex: 1; min-width: 0; display: flex; align-items: center; height: 28px; margin: 0 -1px 0 -2px; padding: 0 21px 0 22px; border-radius: 4px; background: #10131d; }
.field input { flex: 1 1 0; width: 0; min-width: 0; text-align: right; }
.slider { background: #1a384e; border: 2px solid #0d1219; padding: 0 19px 0 20px; }
.vector { display: grid; grid-template-rows: repeat(3, 1fr); height: 86px; margin: 0 1px 0 -1px; padding-bottom: 2px; border-radius: 4px; background: #10131d; }
.vector label { display: flex; align-items: center; justify-content: space-between; padding: 0 21px 0 23px; }
.vector input { width: 60px; text-align: right; }
.vector.centred label { justify-content: center; }
.vector.centred input { text-align: center; }
.tick { display: flex; align-items: center; margin-left: -1px; }
.tick input { appearance: none; position: relative; width: 19px; height: 19px; margin-right: 6px; border-radius: 4px; background: #0b0b0c; border: 2px solid #17191b; }
.tick input:checked { background: #28466e; }
.tick input:checked::before { content: ""; position: absolute; left: 5px; top: 1px; width: 5px; height: 10px; border: solid #fff; border-width: 0 2px 2px 0; transform: rotate(40deg); }
.axes { display: grid; grid-template-columns: repeat(3, 1fr); gap: 2px; height: 28px; margin: 10px 1px 0 0; padding: 2px; border-radius: 5px; background: #191c20; }
.axes button { background: #0c1019; }
.axes .picked { background: #1a384e; color: #fff; }
.drop { display: flex; align-items: center; height: 28px; }
.drop .chev { width: 12px; height: 8px; }
.full { margin: 10px 1px 0; padding: 0 3px 0 9px; border-radius: 5px; background: #04060a; }
.half { margin: 9px 1px 0 0; justify-content: flex-end; gap: 15px; }
.half span { width: 94px; height: 28px; display: flex; align-items: center; padding: 0 3px 0 10px; border-radius: 5px; background: #04060a; }

.n-in { left: 211px; top: 128px; }
.n-curve { left: 580px; top: 258px; padding-bottom: 9px; }
.n-cube { left: 574px; top: 532px; }
.n-alignz { left: 829px; top: 532px; }
.n-alignx { left: 1092px; top: 427px; }
.n-inst { left: 1346px; top: 220px; }
.n-join { left: 1606px; top: 88px; }
.n-hig { left: 1931px; top: 60px; }
.n-out { left: 2252px; top: 64px; }

.scroll { position: absolute; border-radius: 4px; background: #1d2831; }
.vert { right: 4px; top: 19px; width: 7px; height: 68%; }
.horz { left: 14px; bottom: 4px; height: 5px; width: 50%; }

/* scene strokes */
.grid path { stroke: #262c3d; stroke-width: 3; }
.grid .main { stroke: #2d3349; stroke-width: 4; }
.block .edge { fill: none; stroke: #8ce0ff; stroke-width: 4; stroke-linejoin: round; }
.arrow { fill: none; stroke: #8ce0ff; stroke-width: 2; }
```
FILE: scene.js
```js
// Draws the floor grid, the instanced blocks along the spiral and the direction arrows.
const scene = document.getElementById('scene');
const NS = 'http://www.w3.org/2000/svg';
const add = (parent, tag, attrs) => {
  const el = document.createElementNS(NS, tag);
  for (const k in attrs) el.setAttribute(k, attrs[k]);
  return parent.appendChild(el);
};

// Two work areas, each with an origin and a unit size; cone is half the arrowhead's width, lead how far its shoulders sit ahead of the base
const upper = { x: 900, y: 100, sx: 0.4847, sy: 1 / 3, cone: 9, lead: 8 };
const lower = { x: 800, y: 400, sx: 0.5485, sy: 1 / 3, cone: 8, lead: 1 };
const at = (a, x, y) => [a.x + x * a.sx, a.y + y * a.sy];
const toPath = (a, text, close = true) =>
  'M' + text.trim().split(/\s+/).map(p => at(a, ...p.split(',').map(Number)).map(n => n.toFixed(1)).join(' ')).join('L') + (close ? 'Z' : '');

const grid = add(scene, 'g', { class: 'grid' });
[
  [9, 150, 1366, 985], [9, 528, 582, 985], [603, 0, 2522, 808], [1022, 0, 2522, 547],
  [1443, 0, 2522, 346], [1861, 0, 2522, 190], [2282, 0, 2522, 63],
  [275, 0, 9, 111], [577, 0, 9, 266], [873, 0, 9, 464], [1174, 0, 9, 730], [1477, 0, 160, 985],
  [2073, 0, 1289, 985], [2373, 0, 1855, 985], [2522, 573, 2414, 985],
  [184, 0, 2157, 985, 1], [1775, 0, 727, 985, 1],
].forEach(([a, b, c, d, main]) => add(grid, 'path', { d: `M${a} ${b}L${c} ${d}`, class: main ? 'main' : '' }));

// area, outline, base colour, shaded faces, inner edges
const block = (area, outline, fill, faces = [], edges = []) => {
  const g = add(scene, 'g', { class: 'block' });
  add(g, 'path', { d: toPath(area, outline), fill });
  faces.forEach(([pts, c]) => add(g, 'path', { d: toPath(area, pts), fill: c }));
  add(g, 'path', { d: toPath(area, outline), class: 'edge' });
  edges.forEach(e => add(g, 'path', { d: toPath(area, e, false), class: 'edge' }));
};

const U = upper, L = lower, link = (a, pts) => add(scene, 'path', { d: toPath(a, pts, false), class: 'arrow' });

// curve pieces seen between the blocks
['772,290 848,318', '918,355 995,405', '1072,465 1137,525', '1200,603 1258,690', '1310,787 1350,888', '1382,1003 1402,1120']
  .forEach(p => link(U, p));
['595,519 615,519', '683,530 705,538', '1426,345 1418,465', '1400,598 1365,725', '1320,845 1255,965', '1193,1060 1098,1165', '1025,1232 918,1295', '835,1330 727,1356', '640,1356 553,1342', '472,1305 415,1270', '912,1022 992,1108']
  .forEach(p => link(L, p));

// the upper ring
block(U, '527,170 548,130 612,133 618,190 545,260 542,365 533,355', '#8e8e8e');
block(U, '368,183 405,143 463,133 508,335 475,375 410,385', '#7b7b7b', [['405,150 463,133 490,300 440,340', '#929292'], ['440,340 508,335 475,375 410,385', '#666']]);
block(U, '248,220 290,185 340,165 405,370 385,395 325,415', '#8c8d8d', [['300,185 340,165 405,370 385,385', '#6c6c70']]);
block(U, '155,295 248,220 325,415 283,462 238,440', '#858787', [['210,255 248,220 325,415 290,450', '#5b5b5e']]);
block(U, '110,385 118,345 185,285 283,462 240,465 160,420 108,400', '#8d8e8e', [['170,310 188,290 280,455 240,455', '#47464a']]);
block(U, '103,430 168,352 238,465 262,703 215,645 130,490', '#8a8b8b', [['130,440 175,390 238,465 200,520', '#777']]);
block(U, '132,495 193,415 240,465 200,555 262,703 215,645', '#656666', [['132,495 193,415 236,465 170,530', '#a0a1a2']]);
block(U, '197,555 248,463 312,487 297,588 345,745 280,720', '#555857', [['197,555 248,463 310,487 257,578', '#a3a5a5'], ['257,578 305,510 297,588 345,745', '#4a4c4b']]);
block(U, '297,588 318,488 410,490 410,585 442,755 363,752', '#595959', [['297,588 318,488 405,490 373,590', '#a3a5a5'], ['373,590 405,500 410,585 437,750', '#3b3838']]);
block(U, '410,585 410,490 497,472 545,735 458,752', '#545450', [['412,583 412,492 497,472 497,565', '#a1a1a1']]);
block(U, '497,472 577,430 607,505 632,680 552,730', '#454441', [['497,472 577,430 607,505 523,550', '#9c9c9d']]);
block(U, '577,430 630,370 685,425 700,600 637,678 607,505', '#403b38', [['577,430 630,370 685,425 620,490', '#9b9b9c']]);
block(U, '630,370 612,300 718,335 728,520 700,600 685,425', '#3e3a38', [['630,370 612,300 716,337 685,425', '#9d9d9e']]);
block(U, '540,240 590,182 650,210 610,375 555,420', '#777b7a', [['540,240 590,182 650,210 605,275', '#9b9c9c']]);
block(U, '585,250 653,205 705,260 718,335 630,395 612,375 610,285', '#9a9a9b');

// the run of blocks winding down from the ring
block(U, '707,148 777,168 762,360 745,393 718,385 715,300 690,190', '#9a9a9a', [['690,190 707,148 705,340 700,300', '#808080'], ['720,350 760,360 745,393 718,388', '#33302e']]);
block(U, '878,207 943,240 892,458 825,425', '#a5a5a6', [['835,388 900,418 892,458 825,425', '#332f2d']]);
block(U, '970,468 1047,308 1107,352 1103,400 1030,557 972,510', '#a8a8a9', [['970,468 1033,515 1030,557 972,510', '#4c4c4a'], ['1033,515 1107,352 1103,400 1030,557', '#413c3a']]);
block(U, '1103,580 1200,448 1253,512 1252,560 1155,692 1103,628', '#a9a9aa', [['1103,580 1153,645 1155,692 1103,628', '#525351'], ['1153,645 1253,512 1252,560 1155,692', '#423b39']]);
block(U, '1210,738 1335,630 1378,705 1378,765 1257,862 1215,790', '#a8a9aa', [['1210,738 1250,808 1257,862 1215,790', '#565755'], ['1250,808 1350,718 1378,705 1378,765 1257,862', '#403b38']]);
block(U, '1288,918 1433,855 1460,945 1462,998 1320,1062 1300,990', '#a8a9aa', [['1310,1005 1455,943 1462,998 1320,1062', '#413f3c'], ['1288,918 1310,1005 1320,1062 1300,990', '#6c6d6d']]);
block(L, '1355,228 1495,210 1502,368 1367,383', '#a8a9aa', [['1362,322 1498,306 1502,368 1367,383', '#51524f']]);
block(L, '1350,455 1488,488 1492,550 1475,650 1340,608 1333,545', '#a4a6a6', [['1337,550 1470,585 1475,650 1340,608', '#5f6260'], ['1470,585 1488,488 1492,550 1475,650', '#484645']]);
block(L, '1297,682 1422,770 1427,830 1390,925 1268,830 1260,765', '#a5a6a7', [['1262,768 1387,862 1390,925 1268,830', '#656967'], ['1387,862 1422,770 1427,830 1390,925', '#494342']]);

// lower ring, far side
block(L, '607,482 628,455 685,463 681,560 658,580 603,572', '#999', [['607,482 628,455 625,545 607,550', '#808282'], ['610,548 678,555 681,560 658,580 603,572', '#373533']]);
block(L, '500,498 540,465 590,457 597,550 560,575 508,582', '#8b8b89', [['575,462 590,457 597,550 585,558', '#747474']]);
block(L, '395,540 495,482 512,570 440,610', '#828282', [['445,512 495,482 512,570 465,590', '#727274']]);
block(L, '300,632 350,575 412,545 435,612 405,655 365,682 320,670', '#858585', [['385,560 412,545 435,612 405,655', '#666667']]);
block(L, '230,745 250,690 342,628 372,705 350,755 320,775 245,778', '#858686', [['230,745 315,680 350,755 320,775 245,778', '#8b8d8c'], ['318,680 342,628 372,705 350,755', '#535354']]);
block(L, '188,885 200,830 297,742 332,810 325,870 295,890 215,940', '#999', [['188,885 285,810 325,870 295,890 215,940', '#828483'], ['288,810 297,742 332,810 325,870', '#403c40']]);
block(L, '183,990 215,940 287,868 325,935 332,990 232,1108 190,1045', '#9a9b9b', [['190,995 290,930 325,990 232,1108 190,1045', '#777978'], ['290,930 287,868 325,935 332,990 318,1005', '#454244']]);
block(L, '218,1152 317,998 382,1105 282,1265 245,1215', '#a2a3a4', [['245,1190 340,1038 382,1105 282,1265', '#6c6e6e']]);
block(L, '305,1297 388,1112 435,1150 467,1210 385,1395 345,1360', '#a5a6a7', [['350,1342 435,1155 467,1210 385,1395', '#525251'], ['305,1297 350,1342 385,1395 345,1360', '#777']]);
block(L, '447,1410 507,1193 567,1217 593,1270 537,1482 480,1460', '#a7a7a8', [['507,1430 567,1217 593,1270 537,1482', '#3b3838'], ['447,1410 507,1430 537,1482 480,1460', '#5e6160']]);

// inner end of the spiral
block(L, '718,475 770,500 748,617 695,588', '#9f9fa0', [['703,555 752,582 748,617 695,588', '#302e2b']]);
block(L, '797,522 845,565 848,600 822,680 775,632 768,585', '#aaaaab', [['770,590 815,640 822,680 775,632', '#40423f'], ['815,640 845,575 848,600 822,680', '#504f4f']]);
block(L, '862,590 905,655 908,680 865,740 825,675 822,650', '#b0b0b1', [['822,655 858,712 865,740 825,675', '#555']]);
block(L, '740,985 770,925 815,955 855,940 877,900 885,848 880,778 858,712 905,680 935,740 962,850 965,930 945,1045 900,1115 845,1155 785,1150 740,1115', '#696a6a', [
  ['858,712 905,680 935,762 880,778', '#a3a3a4'], ['880,778 935,762 938,850 885,848', '#9c9c9d'], ['885,848 938,850 922,932 877,900', '#999'],
  ['877,900 922,932 885,995 855,940', '#959595'], ['855,940 885,995 832,1025 828,958', '#929292'], ['828,958 832,1025 790,1025 805,955', '#8e8e8e'],
  ['770,925 805,950 790,1025 740,985', '#8c8c8c'], ['935,762 962,850 965,930 945,1045 922,932 938,850', '#4a4747'], ['922,932 945,1045 900,1115 885,995', '#5c5a5a']],
  ['880,778 938,762 962,850', '885,848 938,850 965,930', '877,900 922,932 945,1045', '855,940 885,995 900,1115', '828,958 845,1155', '805,955 785,1020 785,1150', '790,945 765,1000 765,1130', '740,985 790,1025']);

// lower ring, near side
block(L, '653,1228 722,1225 745,1280 727,1503 657,1503 635,1450', '#a8a8a9', [['705,1452 722,1225 745,1280 727,1503', '#3a3636'], ['638,1450 705,1452 727,1503 657,1503', '#5c5e5d']]);
block(L, '822,1200 897,1172 935,1440 863,1472 845,1420', '#a7a7a8', [['845,1418 917,1390 935,1440 863,1472', '#545453'], ['897,1172 935,1440 917,1390', '#3b3635']]);
block(L, '992,1108 1058,1055 1122,1240 1135,1300 1070,1360', '#a7a8a9', [['1057,1300 1120,1248 1135,1300 1070,1360', '#4b4b4a'], ['992,1108 1057,1300 1070,1360', '#777']]);
block(L, '1145,963 1197,888 1300,1035 1305,1090 1252,1168 1148,1020', '#a6a7a8', [['1145,963 1243,1108 1252,1168 1148,1020', '#656968'], ['1243,1108 1298,1032 1305,1090 1252,1168', '#49413f']]);

// each arrow: tip, cone base, tail
const arrow = (area, tx, ty, bx, by, ex, ey) => {
  const [t, b, e] = [at(area, tx, ty), at(area, bx, by), at(area, ex, ey)];
  const dx = t[0] - b[0], dy = t[1] - b[1], len = Math.hypot(dx, dy) || 1;
  const w = Math.min(area.cone, len / 4), ux = dx / len, uy = dy / len, lead = Math.min(area.lead, len / 4);
  const p = (side, ahead) => `${(b[0] - uy * w * side + ux * ahead).toFixed(1)} ${(b[1] + ux * w * side + uy * ahead).toFixed(1)}`;
  add(scene, 'path', { class: 'arrow', d: `M${e}L${b}M${t}L${p(1, lead)}L${p(0.3, -3)}L${p(-1, lead)}ZM${t}L${p(0.3, -3)}M${t}L${p(-0.3, lead + 3)}M${p(1, lead)}L${p(-0.3, lead + 3)}L${p(-1, lead)}` });
};
[
  [508, 80, 517, 190, 542, 460], [660, 83, 655, 193, 646, 455], [811, 133, 792, 240, 744, 490], [950, 232, 915, 330, 830, 548],
  [1067, 375, 1018, 455, 895, 635], [1152, 558, 1095, 612, 935, 742], [1195, 775, 1127, 795, 955, 845], [362, 122, 383, 235, 442, 505],
  [232, 205, 265, 318, 350, 570], [130, 328, 172, 437, 283, 685], [65, 480, 115, 585, 240, 810], [50, 650, 103, 752, 238, 958],
  [93, 820, 148, 917, 280, 1100], [200, 970, 250, 1058, 368, 1225], [365, 1070, 403, 1155, 505, 1310], [565, 1087, 600, 1185, 677, 1335],
  [787, 1025, 812, 1132, 870, 1295], [1002, 900, 1020, 1005, 1057, 1178], [1182, 702, 1197, 812, 1220, 995], [1312, 467, 1320, 578, 1340, 770],
  [1385, 218, 1392, 325, 1410, 518], [1403, -20, 1410, 78, 1427, 265], [1148, 992, 1113, 985, 945, 943],
  [780, 1440, 788, 1328, 807, 1150], [967, 1387, 930, 1290, 865, 1075], [602, 1352, 642, 1258, 740, 1110], [642, 1258, 675, 1222, 765, 1065],
].forEach(a => arrow(L, ...a));
[
  [1347, 650, 1355, 755, 1370, 880], [1273, 467, 1278, 562, 1292, 718], [1171, 315, 1173, 405, 1177, 545], [1052, 200, 1050, 285, 1040, 408],
  [931, 125, 918, 205, 888, 310], [815, 80, 790, 155, 735, 255], [712, 62, 675, 135, 620, 185], [628, 66, 580, 130, 440, 290],
  [570, 83, 520, 145, 270, 330], [560, 95, 490, 165, 300, 350], [545, 110, 470, 180, 230, 395], [530, 130, 440, 190, 330, 330],
  [510, 140, 450, 230, 420, 300], [500, 150, 470, 260, 475, 470], [335, 252, 400, 300, 445, 380], [410, 190, 440, 270, 500, 320],
  [268, 352, 350, 365, 560, 430], [350, 445, 290, 465, 240, 465], [705, 262, 630, 280, 625, 320], [712, 332, 640, 325, 620, 310],
].forEach(a => arrow(U, ...a));
['475,370 475,470', '475,370 520,440', '480,370 320,455', '350,470 560,430', '410,385 350,490', '440,380 575,430', '280,465 410,380', '530,425 420,480', '270,330 560,100', '230,395 400,300', '240,450 390,330', '400,330 520,150', '430,300 430,180', '450,360 480,200', '420,270 500,330', '385,300 455,370', '620,300 700,260', '620,330 710,345', '555,410 580,365', '620,265 700,255', '655,408 612,370', '640,400 612,385', '335,668 362,616', '335,668 375,618', '335,668 382,632', '302,620 325,620', '313,607 313,632', '410,560 393,600', '410,570 410,610', '345,480 350,445', '490,255 530,250']
  .forEach(p => link(U, p));

add(scene, 'circle', { cx: 1222, cy: 519, r: 5, fill: '#8ce0ff', stroke: '#0b1013', 'stroke-width': 1 });
```
